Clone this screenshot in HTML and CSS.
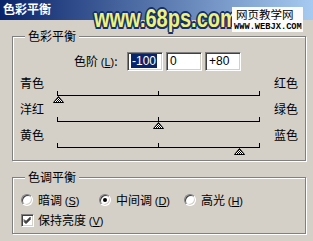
FILE: index.html
```html
<!DOCTYPE html>
<html lang="zh">
<head>
<meta charset="utf-8">
<link rel="stylesheet" href="styles.css">
</head>
<body>
<div class="win">
  <div class="titlebar">色彩平衡</div>

  <div class="group g1">
    <span class="legend">色彩平衡</span>
    <div class="levels">
      <span class="lvl-label">色阶 <span class="mn">(<u>L</u>)</span>:</span>
      <span class="num"><span class="sel">-100</span></span>
      <span class="num">0</span>
      <span class="num">+80</span>
    </div>

    <div class="srow">
      <div class="slabels"><span>青色</span><span>红色</span></div>
      <div class="track"><span class="thumb" style="left:-5px"><svg width="11" height="7" viewBox="0 0 11 7"><defs><pattern id="ck1" width="2" height="2" patternUnits="userSpaceOnUse"><rect width="2" height="2" fill="#fff"/><rect width="1" height="1" fill="#000"/><rect x="1" y="1" width="1" height="1" fill="#000"/></pattern></defs><path d="M5.5 0.5 L10.5 6.5 L0.5 6.5 Z" fill="url(#ck1)" stroke="#000" stroke-width="1"/></svg></span></div>
    </div>
    <div class="srow">
      <div class="slabels"><span>洋红</span><span>绿色</span></div>
      <div class="track"><span class="thumb" style="left:95px"><svg width="11" height="7" viewBox="0 0 11 7"><defs><pattern id="ck2" width="2" height="2" patternUnits="userSpaceOnUse"><rect width="2" height="2" fill="#fff"/><rect width="1" height="1" fill="#000"/><rect x="1" y="1" width="1" height="1" fill="#000"/></pattern></defs><path d="M5.5 0.5 L10.5 6.5 L0.5 6.5 Z" fill="url(#ck2)" stroke="#000" stroke-width="1"/></svg></span></div>
    </div>
    <div class="srow">
      <div class="slabels"><span>黄色</span><span>蓝色</span></div>
      <div class="track"><span class="thumb" style="left:176px"><svg width="11" height="7" viewBox="0 0 11 7"><defs><pattern id="ck3" width="2" height="2" patternUnits="userSpaceOnUse"><rect width="2" height="2" fill="#fff"/><rect width="1" height="1" fill="#000"/><rect x="1" y="1" width="1" height="1" fill="#000"/></pattern></defs><path d="M5.5 0.5 L10.5 6.5 L0.5 6.5 Z" fill="url(#ck3)" stroke="#000" stroke-width="1"/></svg></span></div>
    </div>
  </div>

  <div class="group g2">
    <span class="legend">色调平衡</span>
    <div class="radios">
      <div class="opt o1"><span class="radio"></span><span>暗调 <span class="mn">(<u>S</u>)</span></span></div>
      <div class="opt o2"><span class="radio on"></span><span>中间调 <span class="mn">(<u>D</u>)</span></span></div>
      <div class="opt"><span class="radio"></span><span>高光 <span class="mn">(<u>H</u>)</span></span></div>
    </div>
    <div class="check">
      <span class="cbox"><svg width="11" height="11" viewBox="0 0 11 11"><path d="M2 4.5 L4 6.5 L8.5 2 M2 5.5 L4 7.5 L8.5 3 M2 6.5 L4 8.5 L8.5 4" fill="none" stroke="#000" stroke-width="1"/></svg></span>
      <span>保持亮度 <span class="mn">(<u>V</u>)</span></span>
    </div>
  </div>

  <div class="wm">www.68ps.com</div>
  <div class="webjx">
    <div class="wj1">网页教学网</div>
    <div class="wj2">WWW.WEBJX.COM</div>
  </div>
</div>
</body>
</html>
```

FILE: styles.css
```css
html, body {
  margin: 0;
  padding: 0;
  background: #d4d0c8;
}

.win {
  position: relative;
  width: 313px;
  height: 241px;
  overflow: hidden;
  background: #d4d0c8;
  font-family: "Noto Sans CJK SC", "Liberation Sans", sans-serif;
  font-size: 12px;
  color: #000;
}

.titlebar {
  height: 20px;
  line-height: 18px;
  padding-left: 3px;
  background: linear-gradient(to right, #0a246a, #a6caf0);
  color: #fff;
  font-weight: bold;
  font-size: 12px;
}

.group {
  position: relative;
  box-sizing: border-box;
  width: 294px;
  margin-left: 12px;
  border: 1px solid #808080;
  box-shadow: 1px 1px 0 #fff, inset 1px 1px 0 #fff;
}

.g1 {
  margin-top: 16px;
  height: 125px;
}

.g2 {
  margin-top: 16px;
  height: 57px;
}

.legend {
  position: absolute;
  top: -7px;
  left: 12px;
  padding: 0 3px;
  line-height: 12px;
  background: #d4d0c8;
}

.mn {
  font-family: "Liberation Sans", sans-serif;
  font-size: 11px;
}

.mn u {
  text-underline-offset: 1px;
}

/* Levels row */
.levels {
  display: flex;
  align-items: center;
  gap: 3px;
  margin-top: 15px;
  height: 19px;
  padding-left: 61px;
}

.lvl-label {
  width: 50px;
  line-height: 13px;
}

.num {
  box-sizing: border-box;
  width: 36px;
  height: 19px;
  padding: 2px 0 0 3px;
  background: #fff;
  border: 1px solid;
  border-color: #808080 #fff #fff #808080;
  box-shadow: inset 1px 1px 0 #404040, inset -1px -1px 0 #d4d0c8;
  font-family: "Liberation Sans", sans-serif;
  font-size: 12px;
  line-height: 13px;
}

.sel {
  background: #0a246a;
  color: #fff;
  padding: 0 1px;
}

/* Sliders */
.srow {
  height: 26px;
}

.levels + .srow {
  margin-top: 5px;
}

.slabels {
  display: flex;
  justify-content: space-between;
  height: 13px;
  line-height: 13px;
  padding: 0 7px;
}

.track {
  position: relative;
  box-sizing: border-box;
  width: 203px;
  height: 5px;
  margin: 2px 0 0 44px;
  border-left: 1px solid #000;
  border-right: 1px solid #000;
  border-bottom: 1px solid #000;
}

.track::after {
  content: "";
  position: absolute;
  left: 100px;
  top: 0;
  width: 1px;
  height: 4px;
  background: #000;
}

.thumb {
  position: absolute;
  top: 5px;
  width: 11px;
  height: 7px;
  line-height: 0;
}

/* Tone balance */
.radios {
  display: flex;
  align-items: center;
  margin-top: 15px;
  padding-left: 8px;
  height: 14px;
}

.opt {
  display: flex;
  align-items: center;
  gap: 5px;
  line-height: 14px;
}

.o1 { width: 78px; }
.o2 { width: 85px; }

.radio {
  position: relative;
  box-sizing: border-box;
  width: 12px;
  height: 12px;
  border-radius: 50%;
  background: #fff;
  border: 1px solid;
  border-color: #808080 #fff #fff #808080;
  box-shadow: inset 1px 1px 0 #404040, inset -1px -1px 0 #d4d0c8;
}

.radio.on::after {
  content: "";
  position: absolute;
  left: 3px;
  top: 3px;
  width: 4px;
  height: 4px;
  border-radius: 50%;
  background: #000;
}

.check {
  display: flex;
  align-items: center;
  gap: 4px;
  margin-top: 6px;
  padding-left: 8px;
  height: 14px;
  line-height: 14px;
}

.cbox {
  box-sizing: border-box;
  width: 13px;
  height: 13px;
  background: #fff;
  border: 1px solid;
  border-color: #808080 #fff #fff #808080;
  box-shadow: inset 1px 1px 0 #404040, inset -1px -1px 0 #d4d0c8;
  line-height: 0;
}

/* Watermarks */
.wm {
  position: absolute;
  left: 94px;
  top: 6px;
  font-family: "Liberation Sans", sans-serif;
  font-weight: bold;
  font-size: 20px;
  line-height: 20px;
  white-space: nowrap;
  color: #eef27c;
  transform: scaleY(1.25);
  transform-origin: 0 0;
  text-shadow:
    1.5px 0 0 #15306a, -1.5px 0 0 #15306a, 0 1.5px 0 #15306a, 0 -1.5px 0 #15306a,
    1px 1px 0 #15306a, -1px -1px 0 #15306a, 1px -1px 0 #15306a, -1px 1px 0 #15306a;
}

.webjx {
  position: absolute;
  left: 232px;
  top: 7px;
  width: 71px;
  height: 25px;
  background: #fbfbfb;
  z-index: 2;
}

.wj1 {
  height: 15px;
  padding-left: 4px;
  font-size: 11.5px;
  line-height: 14px;
}

.wj2 {
  padding-left: 2px;
  font-family: "Liberation Mono", monospace;
  font-weight: bold;
  font-size: 8.7px;
  line-height: 10px;
}
```
